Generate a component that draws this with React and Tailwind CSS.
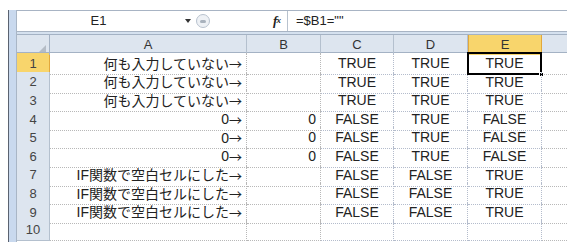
import React from "react";

const font = { fontFamily: '"Liberation Sans", "Noto Sans CJK JP", sans-serif' };
const jp = { fontFamily: '"Noto Sans CJK JP", "Liberation Sans", sans-serif' };

const rows = [
  ["何も入力していない", "", "TRUE", "TRUE", "TRUE"],
  ["何も入力していない", "", "TRUE", "TRUE", "TRUE"],
  ["何も入力していない", "", "TRUE", "TRUE", "TRUE"],
  ["0", "0", "FALSE", "TRUE", "FALSE"],
  ["0", "0", "FALSE", "TRUE", "FALSE"],
  ["0", "0", "FALSE", "TRUE", "FALSE"],
  ["IF関数で空白セルにした", "", "FALSE", "FALSE", "TRUE"],
  ["IF関数で空白セルにした", "", "FALSE", "FALSE", "TRUE"],
  ["IF関数で空白セルにした", "", "FALSE", "FALSE", "TRUE"],
  ["", "", "", "", ""],
];

const cols = "grid grid-cols-[33px_197px_74px_73px_74px_74px_1fr]";

export default function App() {
  return (
    <div className="w-[567px] h-[242px] overflow-hidden bg-white pt-[10px] pl-[8px] text-[#222]" style={font}>
      <div className="flex h-full border-l border-[#5a6270]">
        {/* left blue strip */}
        <div className="w-[8px] shrink-0 bg-[#c9d9ee] border-r border-[#a9b6c6]" />

        <div className="flex-1 flex flex-col">
          {/* formula bar */}
          <div className="h-[22px] flex items-stretch border-y border-[#a8b4c4] bg-white">
            <div className="w-[163px] flex items-center justify-center text-[13px]">E1</div>
            <div className="w-[16px] flex items-center justify-center">
              <div className="w-0 h-0 border-x-[3px] border-x-transparent border-t-[4px] border-t-[#333]" />
            </div>
            <div className="w-[21px] flex items-center">
              <div className="w-[14px] h-[14px] rounded-full border border-[#b8c2ce] bg-[#eef1f5] flex items-center justify-center">
                <div className="w-[6px] h-[3px] rounded-sm bg-[#a9b2bd]" />
              </div>
            </div>
            <div className="w-[50px]" />
            <div className="w-[20px] flex items-center justify-center text-[13px] italic font-bold" style={{ fontFamily: '"Liberation Serif", serif' }}>
              f<span className="text-[9px] -ml-px">x</span>
            </div>
            <div className="w-px bg-[#b8c2ce]" />
            <div className="flex-1 flex items-center pl-[8px] text-[13px]">=$B1=""</div>
          </div>

          <div className="h-[2px] bg-[#d5e1ef]" />

          {/* column headers */}
          <div className={`${cols} h-[19px] bg-[#dde5ef] border-y border-[#a4b2c4] text-[13px] text-[#333]`}>
            <div className="relative border-r border-[#a4b2c4]">
              <div className="absolute right-[3px] bottom-[3px] w-0 h-0 border-l-[7px] border-l-transparent border-b-[7px] border-b-[#b4bcc6]" />
            </div>
            {["A", "B", "C", "D"].map((c) => (
              <div key={c} className="flex items-center justify-center border-r border-[#b4c0ce]">
                {c}
              </div>
            ))}
            <div className="flex items-center justify-center bg-[#f8d56c] border-x border-[#e2a83c]">E</div>
            <div />
          </div>

          {/* rows */}
          {rows.map((r, i) => (
            <div key={i} className={`${cols} h-[18.6px] shrink-0 text-[14px]`}>
              <div
                className={`flex items-center justify-center text-[13px] text-[#444] border-r border-b ${
                  i === 0 ? "bg-[#f8d56c] border-[#e2a83c]" : "bg-[#dde5ef] border-[#b4c0ce]"
                }`}
              >
                {i + 1}
              </div>
              <div className="flex items-center justify-end pr-[4px] border-r border-b border-dotted border-[#b8b8b8] leading-none">
                {r[0] && (
                  <>
                    <span>{r[0]}</span>
                    <span style={jp} className="text-[13px]">→</span>
                  </>
                )}
              </div>
              <div className="flex items-center justify-end pr-[4px] border-r border-b border-dotted border-[#b8b8b8]">{r[1]}</div>
              <div className="flex items-center justify-center border-r border-b border-dotted border-[#b4bccc]">{r[2]}</div>
              <div className="flex items-center justify-center border-r border-b border-dotted border-[#b4bccc]">{r[3]}</div>
              <div className="relative flex items-center justify-center border-r border-b border-dotted border-[#b4bccc]">
                {r[4]}
                {i === 0 && (
                  <>
                    <div className="absolute -left-px -top-px -right-px -bottom-px border-2 border-black" />
                    <div className="absolute -right-[3px] -bottom-[3px] w-[5px] h-[5px] bg-black border border-white" />
                  </>
                )}
              </div>
              <div className="border-b border-dotted border-[#b8b8b8]" />
            </div>
          ))}
        </div>
      </div>
    </div>
  );
}
